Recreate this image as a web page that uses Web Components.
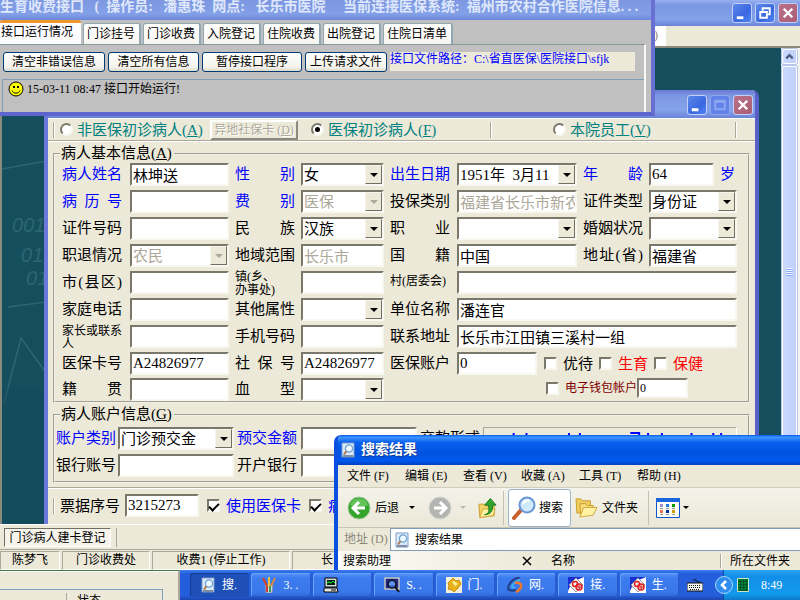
<!DOCTYPE html>
<html lang="zh-CN">
<head>
<meta charset="utf-8">
<title>生育收费接口</title>
<style>
html, body { margin: 0; height: 100%; overflow: hidden; }
body { font: 12px/16px "Liberation Serif", "Noto Sans CJK SC", serif; color: #000; }
</style>
</head>
<body>
<xp-desktop></xp-desktop>
<script>
const define = (name, css, html) => customElements.define(name, class extends HTMLElement {
  connectedCallback() {
    if (this.shadowRoot) return;
    const t = document.createElement('template');
    t.innerHTML = `<style>*{box-sizing:border-box}${css}</style>${typeof html === 'function' ? html(this) : html}`;
    this.attachShadow({ mode: 'open' }).append(t.content.cloneNode(true));
  }
});

const ICONS = {
  doc: `<svg viewBox="0 0 16 16"><path d="M2 1h12v14H2z" fill="#dcebfb" stroke="#7f9cc4"/><path d="M3 13h10v2H3z" fill="#7e8ea8"/><circle cx="9" cy="6.5" r="3.6" fill="#eefaff" stroke="#6da0d4" stroke-width="1.3"/><path d="M6.5 9 4 12.5" stroke="#b0764c" stroke-width="2"/></svg>`,
  smile: `<svg viewBox="0 0 16 16"><circle cx="8" cy="8" r="7" fill="#ff0" stroke="#000"/><path d="M5 5h2v2H5zM9 5h2v2H9z"/><path d="M4 9.5c1 3.5 7 3.5 8 0" fill="none" stroke="#000"/></svg>`,
  back: `<svg viewBox="0 0 24 24"><circle cx="12" cy="12" r="11" fill="#35a52c" stroke="#a7cba0"/><path d="M3 9a9.5 9.5 0 0 1 18 0c-5 3-12 3-18 0z" fill="#7ad16c" opacity=".7"/><path d="M12 6l-6 6 6 6M7 12h11" fill="none" stroke="#fff" stroke-width="3"/></svg>`,
  fwd: `<svg viewBox="0 0 24 24"><circle cx="12" cy="12" r="11" fill="#b4b4b2" stroke="#d6d6d2"/><path d="M12 6l6 6-6 6M17 12H6" fill="none" stroke="#fff" stroke-width="3"/></svg>`,
  up: `<svg viewBox="0 0 22 22"><path d="M2 7h6l2 2h8v10L3 21z" fill="#f3d568" stroke="#c99a2b"/><path d="M3 21l3-9h13l-2 7z" fill="#fff0a0" stroke="#d2a63a"/><path d="M8 18c5-1 5-5 4-10H8l6-7 6 7h-4c1 6-2 10-8 10z" fill="#31a42e" stroke="#167a1a"/></svg>`,
  lens: `<svg viewBox="0 0 24 24"><path d="M10 13 2 22" stroke="#c8612b" stroke-width="4" stroke-linecap="round"/><circle cx="15" cy="9" r="7.5" fill="#cfeafd" stroke="#6a96d8" stroke-width="2"/><path d="M11 8c1-3 4-4 6-3" fill="none" stroke="#fff" stroke-width="2"/></svg>`,
  folder: `<svg viewBox="0 0 24 22"><path d="M1 2h5l2 2h8v11L2 17z" fill="#f0cf60" stroke="#c99a2b"/><path d="M5 7h6l2 2h6v9L6 20z" fill="#f8df7c" stroke="#c99a2b"/><path d="M5 21l4-10h14l-4 8z" fill="#fff2a4" stroke="#d2a63a"/></svg>`,
  views: `<svg viewBox="0 0 24 20"><path d="M.5.5h23v19H.5z" fill="#fffef4" stroke="#0b55cc"/><path d="M0 0h24v4H0z" fill="#1a66dc"/><path d="M4 6h3v3H4z" fill="#9a92cc"/><path d="M10 6h3v3h-3z" fill="#1a7ee0"/><path d="M16 6h3v3h-3z" fill="#090"/><path d="M4 12h3v3H4z" fill="#f07050"/><path d="M10 12h3v3h-3z" fill="#039"/><path d="M16 12h3v3h-3z" fill="#c90"/><path d="M4 10.500h3m3 0h3m3 0h3M4 16.500h3m3 0h3m3 0h3" stroke="#999"/></svg>`,
  brushes: `<svg viewBox="0 0 16 16"><path d="M4 8h8l-1 8H5z" fill="#c9dcec" stroke="#7b8fae"/><path d="M2 1l4 8" stroke="#d93b1e" stroke-width="2"/><path d="M8 0v9" stroke="#efc53c" stroke-width="2"/><path d="M14 1l-4 8" stroke="#d98a3a" stroke-width="2"/><path d="M6 9v6" stroke="#d03a2a" stroke-width="2"/><path d="M9 9v6" stroke="#3f9a50" stroke-width="2"/></svg>`,
  pc: `<svg viewBox="0 0 16 16"><path d="M2 1h12v9H2z" fill="#d8d8d0" stroke="#000"/><path d="M4 3h8v5H4z" fill="#022"/><path d="M4 6l2-1 2 1 2-2 2 2" fill="none" stroke="#0f0"/><path d="M1 11h13l1 4H1z" fill="#e8e8e0" stroke="#000"/><path d="M8 13h5" stroke="#000"/></svg>`,
  screen: `<svg viewBox="0 0 16 16"><path d="M1 1h14v11H1z" fill="#222c88" stroke="#c8c8c0" stroke-width="1.500"/><circle cx="8" cy="7" r="4" fill="#3d6be0" stroke="#111" stroke-width="1.500"/><path d="M11 10l4 5" stroke="#111" stroke-width="2"/><path d="M6 8V6m2 2V5m2 3V6" stroke="#9cf"/></svg>`,
  gold: `<svg viewBox="0 0 16 16"><path d="M0 0h16v16H0z" fill="#f6f0d8"/><path d="M2 6l5-5 3 3 3-1 2 4-3 4-4 4-2-2-4-1 1-3z" fill="#e9b21c" stroke="#c98a10"/><path d="M6 5l2-1 4 3-3 2z" fill="#fff3a0"/></svg>`,
  swirl: `<svg viewBox="0 0 16 16"><path d="M13 0C5 2 1 7 1 12c2 2 5 2 8 1" fill="none" stroke="#203e84" stroke-width="2"/><path d="M13 3C9 4 5 7 5 10c1 1 2 1 3 0" fill="none" stroke="#3fc0f0" stroke-width="1.500"/><path d="M8 6c4-1 7 1 6 4-1 3-3 4-5 5" fill="none" stroke="#f07828" stroke-width="2.500"/></svg>`,
  med: `<svg viewBox="0 0 16 16"><path d="M0 0h16v16H0z" fill="#fff"/><path d="M0 0h16L4 5 0 14z" fill="#1b2fd0"/><path d="M8 1l7 7-7 7-7-7z" fill="#f3f3f3" stroke="#999"/><circle cx="7" cy="7" r="2.500" fill="none" stroke="#e02020" stroke-width="1.500"/><circle cx="11" cy="10" r="3" fill="none" stroke="#e02020" stroke-width="1.500"/><path d="M11 8v4M9 10h4" stroke="#e02020"/></svg>`,
  keyboard: `<svg viewBox="0 0 16 14"><path d="M6 1c1 2 3 0 4 2s3 0 3 2" fill="none" stroke="#111"/><path d="M0 5h16v8H0z" fill="#f4f4ee" stroke="#111"/><path d="M2 7.500h12M2 9.500h12M3 11.500h10" stroke="#111" stroke-dasharray="1 1"/></svg>`,
  grid: `<svg viewBox="0 0 12 14"><path d="M0 0h12v14H0z" fill="#053"/><path d="M1 2h10M1 5h10M1 8h10M1 11h10" stroke="#0a2" stroke-dasharray="2 1"/><path d="M.5.5h11v13H.5z" fill="none" stroke="#cde8c8"/></svg>`,
  chevron: `<svg viewBox="0 0 18 18"><circle cx="9" cy="9" r="8.500" fill="#2f8df0" stroke="#a8d8fb"/><path d="M11 5 7 9l4 4" fill="none" stroke="#fff" stroke-width="2.500"/></svg>`,
  scrollup: `<svg viewBox="0 0 14 14"><path d="M3.500 9 7 5.500 10.500 9" fill="none" stroke="#4d6185" stroke-width="2.500"/></svg>`,
  min: `<svg viewBox="0 0 19 19"><path d="M4 13h7v3H4z" fill="#fff"/></svg>`,
  max: `<svg viewBox="0 0 19 19"><path d="M4.500 5h10v9h-10zM4 6h11" fill="none" stroke="#8ea6f2" stroke-width="2"/></svg>`,
  restore: `<svg viewBox="0 0 19 19"><path d="M7 7V4.500h7.500V11H12" fill="none" stroke="#fff" stroke-width="2"/><path d="M4.500 8.500h7v6h-7z" fill="none" stroke="#fff" stroke-width="2"/></svg>`,
  close: `<svg viewBox="0 0 19 19"><path d="M5 5l9 9M14 5l-9 9" stroke="#fff" stroke-width="2.500"/></svg>`
};

define('xp-icon', `:host{display:block;flex:none;width:16px;height:16px}svg{display:block;width:100%;height:100%}`,
  el => ICONS[el.getAttribute('name')]);

define('caption-button', `
:host{display:block;flex:none;width:20px;height:20px}
button{display:block;width:100%;height:100%;padding:0;border:1px solid #c3d0f6;border-radius:3px;background:linear-gradient(135deg,#5d88ea,#3a67e0 60%,#4f86f4)}
:host([kind=close]) button{background:linear-gradient(135deg,#b9708a,#aa5e74)}
:host([kind=max]) button{background:#6182e6;border-color:#8fa6ee}
xp-icon{width:100%;height:100%}`,
  el => `<button aria-label="${el.getAttribute('kind')}"><xp-icon name="${el.getAttribute('kind')}"></xp-icon></button>`);

/* Label and control pair; both become cells of the grid that holds the element. */
define('form-field', `
:host{display:contents}
label{align-self:start;width:60px;font-size:15px;line-height:22px;white-space:nowrap;text-align-last:justify}
:host([blue]) label{color:#00f}
:host([small]) label{font-size:12px;line-height:20px;text-align-last:left}
:host([wrap]) label{font-size:12px;line-height:13px;text-align-last:left;white-space:normal}
.ctl{display:flex;align-self:start;min-width:0;height:23px;background:#fff;border:2px solid;border-color:#7a786a #f8f7f0 #f8f7f0 #7a786a}
input,select{flex:1;min-width:0;width:0;height:19px;margin:0;padding:0 0 0 1px;border:0;outline:0;border-radius:0;background:none;color:#000;font:15px/18px "Liberation Serif","Noto Sans CJK SC",serif;appearance:none;opacity:1}
:host([off]) input,:host([off]) select{color:#aca899}
.arrow{flex:none;width:17px;height:19px;display:grid;place-items:center;background:#ece9d8;border:1px solid;border-color:#f6f4ec #716f64 #716f64 #f6f4ec}
.arrow::after{content:"";border:4px solid transparent;border-top-color:#000;border-bottom:0}
:host([off]) .arrow::after{border-top-color:#aca899}`,
  el => {
    const a = n => el.getAttribute(n) || '', v = a('value'), off = el.hasAttribute('off') ? 'disabled' : '';
    const c = el.hasAttribute('select')
      ? `<select id="c" ${off}><option>${v}</option></select><span class="arrow"></span>`
      : `<input id="c" value="${v}" ${off}>`;
    return `<label for="c">${a('label')}</label><div class="ctl" style="grid-column:span ${a('span') || 1}">${c}</div>`;
  });

define('check-option', `
:host{display:flex;align-items:center;flex:none;font-size:15px;line-height:20px;white-space:nowrap}
label{display:flex;align-items:center;gap:6px}
:host([type=radio]) label{gap:4px}
input{flex:none;appearance:none;width:13px;height:13px;margin:0;background:#fff;border:2px solid;border-color:#7a786a #f8f7f0 #f8f7f0 #7a786a;display:grid;place-items:center}
input[type=radio]{border-radius:50%}
input[type=radio]:checked::after{content:"";width:5px;height:5px;border-radius:50%;background:#000}
input[type=checkbox]:checked::after{content:"";width:8px;height:4px;border:solid #000;border-width:0 0 2px 2px;transform:rotate(-45deg)}`,
  el => `<label><input type="${el.getAttribute('type') || 'checkbox'}" name="o" ${el.hasAttribute('checked') ? 'checked' : ''}><span><slot></slot></span></label>`);

define('xp-button', `
:host{display:block;flex:none}
button{width:100%;height:20px;padding:0;border:1px solid #003c74;border-radius:3px;background:linear-gradient(#fff,#f3f2ea 80%,#dcd8cb);font:12px/16px "Liberation Serif","Noto Sans CJK SC",serif;color:#000;white-space:nowrap}
:host([flat]) button{border-radius:0;border:2px solid;border-color:#fff #8c8a7c #8c8a7c #fff;background:#ece9d8;color:#aca899;text-shadow:1px 1px #fff}`,
  el => `<button ${el.hasAttribute('flat') ? 'disabled' : ''}><slot></slot></button>`);

define('page-tab', `
:host{display:block;flex:none}
button{height:21px;padding:0 4px 0 3px;border:1px solid #91a7b4;border-bottom:0;border-right-width:2px;border-radius:3px 3px 0 0;background:linear-gradient(#fff,#f6f5ef);font:12px/16px "Liberation Serif","Noto Sans CJK SC",serif;color:#000;white-space:nowrap}
:host([on]) button{height:24px;width:81px;padding:0 0 3px 1px;text-align:left;border:0;border-top:3px solid #f0952c;background:#fcfcfe}`,
  `<button role="tab"><slot></slot></button>`);

define('interface-window', `
:host{display:flex;flex-direction:column;background:#c0c0c0;border:solid #5d66cc;border-width:0 4px 4px 0;border-right-color:#6a6fd2}
header{height:20px;flex:none;padding:0;overflow:hidden;background:linear-gradient(#7c97e0,#82a0e8 70%,#6e86da);color:#dfe7fb}
h1{margin:0;font-size:14px;line-height:14px;white-space:pre}
nav{display:flex;align-items:flex-end;height:24px;gap:2px}
.body{flex:1;min-height:0;margin-right:5px;border:solid #f8f8f4;border-width:0 2px 0 0;border-top:1px solid #8a979e;display:flex;flex-direction:column}
.bar{display:grid;grid-template-columns:102px 91px 100px 82px 1fr;gap:3px;padding:7px 9px 7px 3px}
.path{height:19px;background:#ece9d8;color:#00f;line-height:14px;font-size:12px;white-space:nowrap}
.log{flex:1;margin-left:2px;border:1px solid #7f9db9;border-width:1px 0 0 1px;padding:1px 5px}
.log p{display:flex;align-items:center;gap:3px;margin:0}`,
  `<header><h1>生育收费接口   (  操作员:   潘惠珠  网点:   长乐市医院     当前连接医保系统:  福州市农村合作医院信息. . .</h1></header>
  <nav role="tablist"><page-tab on>接口运行情况</page-tab><page-tab>门诊挂号</page-tab><page-tab>门诊收费</page-tab><page-tab>入院登记</page-tab><page-tab>住院收费</page-tab><page-tab>出院登记</page-tab><page-tab>住院日清单</page-tab></nav>
  <div class="body"><div class="bar"><xp-button>清空非错误信息</xp-button><xp-button>清空所有信息</xp-button><xp-button>暂停接口程序</xp-button><xp-button>上传请求文件</xp-button><div class="path">接口文件路径：C:\\省直医保\\医院接口\\sfjk</div></div>
  <div class="log"><p><xp-icon name="smile"></xp-icon>15-03-11 08:47 接口开始运行!</p></div></div>`);

define('patient-window', `
:host{display:flex;flex-direction:column;overflow:hidden;border:solid #6a78dc;border-width:0 4px;border-right-color:#5a5fc8;border-radius:7px 7px 0 0;background:#ece9d8}
header{flex:none;height:28px;display:flex;justify-content:flex-end;align-items:center;gap:3px;padding:2px 2px 0;background:linear-gradient(#6a78d4,#7b97e2 20%,#86a4ea 70%,#6a83d8)}
.kinds{display:grid;grid-template-columns:157px 96px 184px 58px 1fr 20px;align-items:center;height:23px;margin:0;padding-left:5px;color:#008080;border-bottom:1px solid #aca899;box-shadow:0 1px #fff;border-top:1px solid #fff}
.kinds check-option{margin-left:5px}
.first{display:flex;align-items:center}
.rule{width:2px;height:16px;border-left:1px solid #aca899;background:#fff}
fieldset{margin:0 5px;min-width:0;padding:0 11px 0 7px;border:2px groove #f4f2e6}
legend{font-size:15px;line-height:19px;padding:0 2px 0 1px;margin-left:-2px}
.info{margin-top:3px}
.grid{display:grid;grid-template-columns:62px 99px 60px 83px 61px 120px 60px 1fr;column-gap:6px;grid-auto-rows:27px}
.info .grid{grid-template-rows:repeat(7,27px) 26px 23px}
.cell{display:flex;align-items:start;min-width:0;gap:6px;height:23px}
.cell.row{align-items:center;justify-content:space-between;padding:0 34px 0 1px;color:#f00}
.cell .k{color:#000}
.age{grid-column:span 2;display:grid;grid-template-columns:60px 65px 1fr;column-gap:6px}
.age span{font-size:15px;line-height:22px;color:#00f}
.purse{grid-column:6 / span 3;display:flex;justify-content:flex-end;align-items:center;height:20px;padding-right:49px;color:#800000}
.purse check-option{font-size:12px}
.purse input,.ticket input{width:51px;height:20px;margin:0;padding:0 1px;border:2px solid;border-color:#7a786a #f8f7f0 #f8f7f0 #7a786a;border-radius:0;background:#fff;font:12px/15px "Liberation Serif","Noto Sans CJK SC",serif}
.account{margin-top:2px;padding:3px 11px 0 1px}
.account legend{margin-left:4px}
.account .grid{grid-template-columns:59px 116px 61px 116px 60px 1fr;column-gap:3px}
.pay{font-size:15px;line-height:22px;white-space:nowrap}
.marks{height:23px;border-top:1px solid #aca899;border-left:1px solid #aca899;border-right:1px solid #fff}
.marks svg{display:block;width:100%;height:10px}
.ticket{display:flex;align-items:center;height:36px;margin-top:4px;padding-left:5px;border-top:1px solid #aca899;box-shadow:inset 0 1px #fff;color:#00f}
.ticket label{margin:0 5px;color:#000;font-size:15px}
.ticket input{width:74px;height:23px;font-size:15px;line-height:18px}
.ticket check-option{margin-left:8px}`,
  `<header><caption-button kind="min"></caption-button><caption-button kind="max"></caption-button><caption-button kind="close"></caption-button></header>
  <div class="kinds"><div class="first"><span class="rule"></span><check-option type="radio">非医保初诊病人(<u>A</u>)</check-option></div><xp-button flat style="width:88px">异地社保卡 (<u>D</u>)</xp-button><check-option type="radio" checked>医保初诊病人(<u>F</u>)</check-option><span class="rule"></span><check-option type="radio">本院员工(<u>V</u>)</check-option><span class="rule"></span></div>
  <fieldset class="info"><legend>病人基本信息(<u>A</u>)</legend><div class="grid">
  <form-field blue label="病人姓名" value="林坤送"></form-field><form-field blue select label="性 别" value="女"></form-field><form-field blue select label="出生日期" value="1951年&nbsp; 3月11"></form-field><div class="age"><form-field blue label="年 龄" value="64"></form-field><span>岁</span></div>
  <form-field blue label="病 历 号"></form-field><form-field blue select off label="费 别" value="医保"></form-field><form-field off label="投保类别" value="福建省长乐市新农合"></form-field><form-field select label="证件类型" value="身份证"></form-field>
  <form-field label="证件号码"></form-field><form-field select label="民 族" value="汉族"></form-field><form-field select label="职 业"></form-field><form-field select label="婚姻状况"></form-field>
  <form-field select off label="职退情况" value="农民"></form-field><form-field off label="地域范围" value="长乐市"></form-field><form-field label="国 籍" value="中国"></form-field><form-field label="地址(省)" value="福建省"></form-field>
  <form-field label="市(县区)"></form-field><form-field wrap label="镇(乡、<br>办事处)"></form-field><form-field small span="3" label="村(居委会)"></form-field>
  <form-field label="家庭电话"></form-field><form-field select label="其他属性"></form-field><form-field span="3" label="单位名称" value="潘连官"></form-field>
  <form-field wrap label="家长或联系人"></form-field><form-field label="手机号码"></form-field><form-field span="3" label="联系地址" value="长乐市江田镇三溪村一组"></form-field>
  <form-field label="医保卡号" value="A24826977"></form-field><form-field label="社 保 号" value="A24826977"></form-field><div class="cell" style="grid-column:span 4;display:grid;grid-template-columns:61px 80px 1fr"><form-field label="医保账户" value="0"></form-field><div class="cell row"><check-option class="k">优待</check-option><check-option>生育</check-option><check-option>保健</check-option></div></div>
  <form-field label="籍 贯"></form-field><form-field select label="血 型"></form-field><div class="purse"><check-option>电子钱包帐户</check-option><input aria-label="电子钱包帐户" value="0"></div>
  </div></fieldset>
  <fieldset class="account"><legend>病人账户信息(<u>G</u>)</legend><div class="grid">
  <form-field blue select label="账户类别" value="门诊预交金"></form-field><form-field blue label="预交金额"></form-field><span class="pay">交款形式</span><div class="marks"><svg viewBox="0 0 255 10" preserveAspectRatio="none"><path d="M30 5v4M43 5v4M86 5v4M97 5v4M148 5h9v4M166 5v4M180 5v4M210 5v4M232 5v4M240 5v4" stroke="#00f" stroke-width="2" fill="none"/></svg></div>
  <form-field label="银行账号"></form-field><form-field label="开户银行"></form-field>
  </div></fieldset>
  <div class="ticket"><span class="rule"></span><label for="n">票据序号</label><input id="n" value="3215273"><check-option checked>使用医保卡</check-option><check-option checked>病人</check-option></div>`);

define('search-window', `
:host{display:flex;flex-direction:column;background:#ece9d8;border-left:4px solid #0a4fe0;border-radius:7px 0 0 0;overflow:hidden}
header{flex:none;display:flex;align-items:center;gap:5px;height:30px;padding-left:2px;background:linear-gradient(#0a5ce8,#3c94ff 8%,#0a5fee 25%,#0053e0 60%,#0058ee 85%,#0040c0);color:#fff;font-size:14px;font-weight:bold;text-shadow:1px 1px #123a94}
nav{display:grid;grid-template-columns:repeat(6,58px);padding-left:9px;height:23px;line-height:22px;border-bottom:1px solid #d0cdbb}
nav a{color:#000;text-decoration:none}
.tools{display:flex;align-items:center;height:40px;padding-left:9px;border-bottom:1px solid #c9c5b2;background:linear-gradient(#f4f3ea,#ebe8d8)}
.tools button{display:flex;align-items:center;gap:4px;padding:0;border:0;background:none;font:12px/16px "Liberation Serif","Noto Sans CJK SC",serif;color:#000;white-space:nowrap}
.big{width:24px;height:24px}
i{flex:none;border:3px solid transparent;border-top-color:#000;border-bottom:0}
.sep{width:1px;height:34px;background:#c5c2ae;margin:0 4px 0 5px}
.tools .on{width:63px;height:38px;padding-left:3px;gap:3px;border:1px solid #98b5cf;border-radius:3px;background:#fff}
.addr{display:flex;height:23px}
.addr label{width:52px;padding-left:6px;line-height:22px;color:#8c8a7c}
.addr div{flex:1;display:flex;align-items:center;gap:5px;padding-left:3px;background:#fff;border:1px solid #7f9db9;border-right:0}
.addr input{flex:1;min-width:0;border:0;padding:0;font:12px/16px "Liberation Serif","Noto Sans CJK SC",serif}
.cols{flex:1;display:grid;grid-template-columns:204px 178px 1fr;align-items:center;line-height:18px}
.cols>*{padding-left:9px}
.cols .assist{display:flex;justify-content:space-between;align-items:center;padding:0 10px 0 5px;height:100%;background:linear-gradient(90deg,#fdfcf8,#ece9d8)}
.cols svg{width:10px;height:10px}
.last{height:14px;line-height:14px;border-left:1px solid #aca899;box-shadow:inset 1px 0 #fff}`,
  `<header><xp-icon name="doc"></xp-icon>搜索结果</header>
  <nav><a href="#">文件 (F)</a><a href="#">编辑 (E)</a><a href="#">查看 (V)</a><a href="#">收藏 (A)</a><a href="#">工具 (T)</a><a href="#">帮助 (H)</a></nav>
  <div class="tools"><button><xp-icon class="big" name="back"></xp-icon>后退</button><i style="margin:0 13px 0 10px"></i><xp-icon class="big" name="fwd"></xp-icon><i style="margin:0 11px 0 8px;border-top-color:#bbb8a8"></i><xp-icon name="up" style="width:21px;height:22px"></xp-icon><span class="sep"></span><button class="on"><xp-icon class="big" name="lens"></xp-icon>搜索</button><button style="margin-left:4px"><xp-icon name="folder" style="width:23px;height:21px"></xp-icon>文件夹</button><span class="sep" style="margin:0 7px 0 10px"></span><xp-icon name="views" style="width:24px;height:20px"></xp-icon><i style="margin-left:3px"></i></div>
  <div class="addr"><label for="a">地址 (D)</label><div><xp-icon name="doc"></xp-icon><input id="a" value="搜索结果"></div></div>
  <div class="cols"><div class="assist">搜索助理<svg viewBox="0 0 10 10"><path d="M1 1l8 8M9 1L1 9" stroke="#000" stroke-width="1.500"/></svg></div><span>名称</span><span class="last">所在文件夹</span></div>`);

define('task-button', `
:host{display:block;min-width:0}
button{display:flex;align-items:center;gap:6px;width:100%;height:24px;padding:0 0 0 10px;border:0;border-radius:3px;background:linear-gradient(#5a97f8,#3c7cf0 20%,#3a78ea 80%,#2f66d4);box-shadow:inset -1px -1px #2a58c4,inset 1px 1px #68a4fa;font:12px/16px "Liberation Serif","Noto Sans CJK SC",serif;color:#fff;white-space:nowrap}
:host([on]) button{background:#1e50b7;box-shadow:inset 1px 1px #153c92}`,
  el => `<button><xp-icon name="${el.getAttribute('icon')}"></xp-icon><slot></slot></button>`);

define('task-bar', `
:host{display:grid;grid-template-columns:180px minmax(0,1fr) 44px 77px;height:30px;background:linear-gradient(#3a80f0,#245edc 12%,#245edb 85%,#1c47b0)}
.peek{overflow:hidden;background:#ece9d8;border-right:2px solid #aca899;border-top:1px solid #3a7a3a;padding-top:18px;box-shadow:inset 0 1px #fff}
.peek div{width:163px;height:14px;border:1px solid #7f9db9;border-width:1px 1px 0 0;padding:3px 0 0 66px}
.peek span{display:block;border-left:1px solid #aca899;padding-left:10px;height:16px;line-height:16px}
.tasks{display:grid;grid-template-columns:repeat(8,minmax(0,1fr));gap:2px;padding:3px 0 0 10px}
.kbd{display:flex;align-items:center;padding-left:8px}
.tray{display:flex;align-items:center;gap:4px;color:#fff;background:linear-gradient(#2aa6f4,#128ee8 20%,#129bee 80%,#0f78c8);border-left:1px solid #0a4ca8}
.tray time{margin-left:8px}`,
  `<div class="peek"><div><span>状态</span></div></div>
  <div class="tasks"><task-button on icon="doc">搜.</task-button><task-button icon="brushes">3. .</task-button><task-button icon="pc"></task-button><task-button icon="screen">S. .</task-button><task-button icon="gold">门.</task-button><task-button icon="swirl">网.</task-button><task-button icon="med">接.</task-button><task-button icon="med">生.</task-button></div>
  <div class="kbd"><xp-icon name="keyboard"></xp-icon></div>
  <div class="tray"><xp-icon name="chevron" style="width:18px;height:18px;margin-left:-9px"></xp-icon><xp-icon name="grid" style="width:12px;height:14px"></xp-icon><time>8:49</time></div>`);

define('main-app', `
:host{display:flex;flex-direction:column;min-height:0;background:#ece9d8}
header{flex:none;height:26px;display:flex;justify-content:flex-end;align-items:center;gap:3px;padding-right:2px;background:linear-gradient(#98b2f0,#7b97e2 20%,#82a2e8 75%,#6a83d8)}
.bar{flex:none;height:22px;border-bottom:2px solid #8c8a7c;display:flex}
.bar span{width:666px;background:#fff;color:#8c8a7c;text-align:right;padding-right:8px;line-height:18px}
.mdi{flex:1;min-height:0;display:flex;background:#154f5e;border-left:2px solid #8c8a7c}
.mdi svg{flex:1;min-width:0;height:100%}
.scroll{width:19px;display:flex;flex-direction:column;padding:1px 3px 0 1px;gap:2px;background:#f4f3ee}
.scroll xp-icon,.thumb{width:15px;border:1px solid #fff;border-radius:2px;background:linear-gradient(90deg,#cbd9fd,#c0d0fb);box-shadow:0 0 0 1px #b4c4ec}
.scroll xp-icon{height:15px}
.thumb{flex:1;display:grid;place-items:center}
.thumb::after{content:"";width:7px;height:8px;margin-bottom:46px;background:repeating-linear-gradient(#eef4fe 0 1px,#8cb0f8 1px 2px)}
.tabs{flex:none;height:26px;display:flex;padding:3px 0 2px 4px;border-top:1px solid #fff;border-bottom:1px solid #aca899}
.tabs button{width:107px;padding:0;border:1px solid;border-color:#716f64 #fff #fff #716f64;background:#f5f3ea;font:12px/16px "Liberation Serif","Noto Sans CJK SC",serif;color:#000}
.tabs::after{content:"";margin-left:5px;border-left:1px solid #aca899}
.status{flex:none;height:20px;display:grid;grid-template-columns:60px 88px 138px 1fr;gap:2px;padding-top:1px;text-align:center;line-height:17px}
.status span{border:1px solid;border-color:#aca899 #fff #fff #aca899}
.status span:last-child{text-align:left;padding-left:28px}`,
  `<header><caption-button kind="min"></caption-button><caption-button kind="restore"></caption-button><caption-button kind="close"></caption-button></header>
  <div class="bar"><span>)</span></div>
  <div class="mdi"><svg viewBox="0 0 778 476" preserveAspectRatio="none"><g fill="none" stroke="#2d6672" stroke-width="1.500"><path d="M0 121l44-8M6 259l38-5M2 355l17-65 25 35M714 300l20-46 10 34"/></g><path d="M0 340h44v136H0z" fill="#11495a" opacity=".4"/><g fill="#2d6672" font-size="20" font-style="italic" font-family="Liberation Sans"><text x="10" y="184">001</text><text x="19" y="214">01</text><text x="24" y="237">01</text></g></svg>
  <div class="scroll"><xp-icon name="scrollup"></xp-icon><div class="thumb"></div></div></div>
  <div class="tabs"><button>门诊病人建卡登记</button></div>
  <div class="status"><span>陈梦飞</span><span>门诊收费处</span><span>收费1 (停止工作)</span><span>长.</span></div>`);

/* Windows float over the main application; each anchors to the desktop's edges. */
define('xp-desktop', `
:host{display:grid;grid-template-rows:minmax(0,1fr) auto;height:100vh;position:relative;overflow:hidden}
patient-window,interface-window,search-window{position:absolute}
patient-window{left:44px;right:41px;top:90px;bottom:76px}
interface-window{left:0;right:145px;top:0;height:116px}
search-window{left:334px;right:0;bottom:30px;height:135px}`,
  `<main-app></main-app><patient-window></patient-window><interface-window></interface-window><search-window></search-window><task-bar></task-bar>`);
</script>
</body>
</html>
